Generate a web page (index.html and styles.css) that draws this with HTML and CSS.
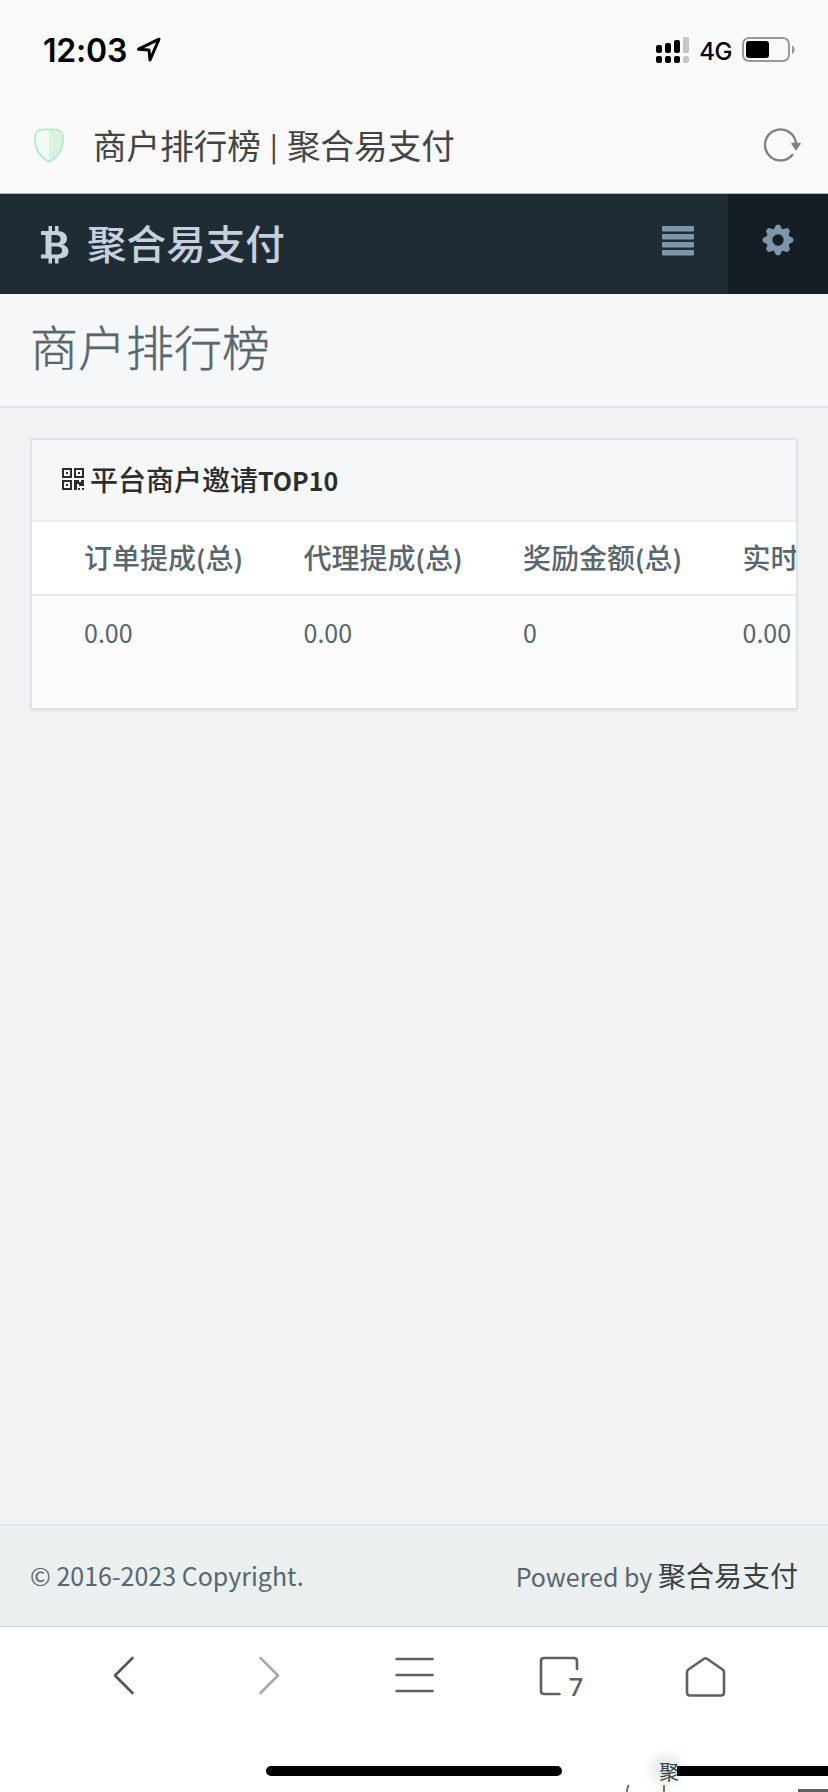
FILE: index.html
```html
<!DOCTYPE html>
<html lang="zh-CN">
<head>
<meta charset="utf-8">
<title>商户排行榜 | 聚合易支付</title>
<link rel="stylesheet" href="styles.css">
</head>
<body>
<div class="phone">
  <header class="chrome">
    <div class="status">
      <span class="clock">12:03</span>
      <svg class="locate" width="26" height="26" viewBox="0 0 26 26"><path d="M2.500 12.200 23 2.200 14 23 13 13z" fill="none" stroke="#000" stroke-width="3" stroke-linejoin="round"/></svg>
      <svg class="signal" width="34" height="27" viewBox="0 0 34 27"><g fill="#000"><rect y="8" width="6" height="8" rx="2"/><rect x="9" y="6" width="6" height="10" rx="2"/><rect x="18" y="3" width="6" height="13" rx="2"/><rect y="19" width="6" height="7" rx="2"/><rect x="9" y="19" width="6" height="7" rx="2"/><rect x="18" y="19" width="6" height="7" rx="2"/></g><g fill="#c6c6c6"><rect x="27" width="6" height="16" rx="1.5"/><rect x="27" y="19" width="6" height="7" rx="2"/></g></svg>
      <span class="network">4G</span>
      <svg class="battery" width="53" height="26" viewBox="0 0 53 26"><rect x="1" y="1" width="46" height="23" rx="6" fill="none" stroke="#999" stroke-width="2"/><rect x="4" y="4" width="23" height="17" rx="3"/><path d="M50 8.500c3.600 1.500 3.600 7 0 8.500z" fill="#999"/></svg>
    </div>
    <div class="address">
      <svg class="shield" width="30" height="35" viewBox="0 0 30 35"><path d="M15 1.200C20 1.200 24.500 2 27 3.500Q28.800 5 28.800 8V14C28.500 23 21.500 31 15 33.600 8.500 31 1.500 23 1.200 14V8Q1.200 5 3 3.500C5.500 2 10 1.200 15 1.200Z" fill="#f3fbf5"/><path d="M15 2C20 2 24 3 26.500 4.500L28 8V14C27.500 23 21 30 15 33z" fill="#d9f3e2"/><path d="M15 1.200C20 1.200 24.500 2 27 3.500Q28.800 5 28.800 8V14C28.500 23 21.500 31 15 33.600 8.500 31 1.500 23 1.200 14V8Q1.200 5 3 3.500C5.500 2 10 1.200 15 1.200Z" fill="none" stroke="#b9ebca" stroke-width="2"/></svg>
      <span class="page-name">商户排行榜<span class="divider"> | </span>聚合易支付</span>
      <svg class="reload" width="37" height="35" viewBox="0 0 37 35"><path d="M28.300 27A15.500 15.500 0 1 1 32 17" fill="none" stroke="#808080" stroke-width="2.400" stroke-linecap="round"/><path d="M28 15.500h8l-4 6z" fill="#808080" stroke="#808080" stroke-width="1.500" stroke-linejoin="round"/></svg>
    </div>
  </header>

  <nav class="navbar">
    <div class="brand">
      <svg width="28" height="39" viewBox="0 0 28 39"><path d="M0 6H15.500C23 6 26 9.500 26 13.500 26 16.500 24.500 18.800 21.500 19.800 25 20.500 27.500 23 27.500 26.500 27.500 31 24 33.500 16 33.500H0V29.500H4.500V10H0zM10.500 10V17.800H14.500C18 17.800 19.500 16.500 19.500 13.900S18 10 14.500 10zM10.500 21.500V29.500H15C19 29.500 21 28.500 21 25.500S19 21.500 15 21.500z" fill="#c7d0de" fill-rule="evenodd"/><path d="M7.500 1h3.500v6H7.500zM14 1h3.500v6H14zM7.500 32h3.500v6.500H7.500zM14 32h3.500v6.500H14z" fill="#c7d0de"/></svg>
      <span class="brand-name">聚合易支付</span>
    </div>
    <div class="menu-button"><svg width="32" height="30" viewBox="0 0 32 30" fill="#7f95a9"><rect width="32" height="5.600" rx="1"/><rect y="8" width="32" height="5.600" rx="1"/><rect y="16" width="32" height="5.600" rx="1"/><rect y="24" width="32" height="5.600" rx="1"/></svg></div>
    <div class="settings-button"><svg width="32" height="32" viewBox="-16 -16 32 32"><g fill="#7f95a9"><g id="teeth"><path id="tooth" d="M-4.500-10-2.300-14.500Q-2-15.300-1-15.300H1Q2-15.300 2.300-14.500L4.500-10z"/><use href="#tooth" transform="rotate(45)"/><use href="#tooth" transform="rotate(90)"/><use href="#tooth" transform="rotate(135)"/></g><use href="#teeth" transform="rotate(180)"/></g><circle r="8.700" fill="none" stroke="#7f95a9" stroke-width="6"/></svg></div>
  </nav>

  <main class="content">
    <div class="page-header"><h1>商户排行榜</h1></div>
    <section class="panel">
      <div class="panel-heading">
        <svg width="22" height="22" viewBox="0 0 22 22" shape-rendering="crispEdges"><g fill="none" stroke="#2b2d2f" stroke-width="2"><path d="M1 1h8v8H1zM13 1h8v8h-8zM1 13h8v8H1z"/></g><path d="M4 4h2v2H4zM16 4h2v2h-2zM4 16h2v2H4zM12 12h5v2h2v-2h3v6h-5v-2h-2v6h-3zM16 20h2v2h-2zM20 20h2v2h-2z" fill="#2b2d2f"/></svg>
        <span>平台商户邀请<span class="latin">TOP10</span></span>
      </div>
      <div class="table-wrap">
        <table>
          <thead><tr><th class="gutter"></th><th>订单提成<span class="latin">(</span>总<span class="latin">)</span></th><th>代理提成<span class="latin">(</span>总<span class="latin">)</span></th><th>奖励金额<span class="latin">(</span>总<span class="latin">)</span></th><th>实时</th></tr></thead>
          <tbody><tr><td></td><td>0.00</td><td>0.00</td><td>0</td><td>0.00</td></tr></tbody>
        </table>
      </div>
    </section>
  </main>

  <footer class="footer">
    <span class="latin">© 2016-2023 Copyright.</span>
    <span><span class="latin">Powered by </span><a class="site">聚合易支付</a></span>
  </footer>

  <div class="toolbar">
    <div class="tools">
      <svg viewBox="0 0 46 42"><path d="M31.500 3 14 20.500 31.500 38" stroke="#555"/></svg>
      <svg viewBox="0 0 46 42"><path d="M13.500 3 31 20.500 13.500 38" stroke="#aaa"/></svg>
      <svg viewBox="0 0 46 42"><path d="M4.500 4h36M4.500 20h36M4.500 36h36" stroke="#606060"/></svg>
      <svg viewBox="0 0 46 42"><path d="M21.500 39H6Q3 39 3 36V6Q3 3 6 3H36Q39 3 39 6V14" stroke="#606060"/><text x="30.500" y="40.500">7</text></svg>
      <svg viewBox="0 0 46 42"><path d="M21 3.800Q22.500 2.700 24 3.800L39.500 14.500Q41 15.500 41 17V37.500Q41 40.500 38 40.500H7Q4 40.500 4 37.500V17Q4 15.500 5.500 14.500Z" stroke="#606060"/></svg>
    </div>
    <div class="home-bar"></div>
    <div class="stray">
      <div class="stray-glow"></div>
      <div class="stray-bar"></div>
      <span class="stray-text">聚</span>
      <svg width="210" height="8" viewBox="0 0 210 8"><path d="M9 8Q9 3 11 1M46 1V8" fill="none" stroke="#777" stroke-width="2"/><path d="M180 6.500h30" stroke="#606060" stroke-width="3"/></svg>
    </div>
  </div>
</div>
</body>
</html>
```
FILE: styles.css
```css
* { box-sizing: border-box; }
body { margin: 0; font-family: "Noto Sans CJK SC", sans-serif; color: #58666e; }
svg { display: block; flex: none; }
.phone { width: 828px; height: 1792px; display: flex; flex-direction: column; overflow: hidden; background: #f0f2f4; }
.chrome { height: 194px; background: #f9f9f9; border-bottom: 1px solid #b3b5b8; }
.status { height: 98px; padding: 2px 33px 0 43px; display: flex; align-items: center; color: #000; font-family: Inter, sans-serif; }
.clock { font-size: 32px; font-weight: 600; width: 93px; letter-spacing: -0.200px; }
.locate { margin-right: auto; }
.network { font-size: 24px; font-weight: 500; margin: 2px 10px 0 9px; letter-spacing: -0.500px; }
.address { height: 94px; display: flex; align-items: center; padding: 0 27px 0 34px; }
.page-name { flex: 1; margin-left: 29px; font-size: 33.600px; color: #444; line-height: 48px; white-space: pre; padding-bottom: 1px; }
.divider { display: inline-block; width: 26px; text-align: center; font-size: 27px; line-height: 30px; font-weight: 500; vertical-align: 2px; }
.navbar { height: 100px; display: flex; background: #202c34; }
.brand { flex: 1; padding: 0 0 0 41px; display: flex; align-items: center; gap: 18px; font-size: 39.600px; line-height: 58px; font-weight: 500; color: #c7d0de; }
.brand-name { padding-bottom: 5px; }
.menu-button, .settings-button { width: 100px; display: flex; align-items: center; justify-content: center; padding-bottom: 6px; }
.settings-button { background: #161e25; padding-bottom: 8px; }
.content { height: 1230px; }
.page-header { height: 114px; padding: 16px 30px; background: #f6f7f9; border-bottom: 2px solid #e1e4e6; }
h1 { margin: 0; font-size: 48px; font-weight: 300; line-height: 70px; -webkit-text-stroke: 0.400px #58666e; }
.panel { height: 272px; margin: 30px; border: 2px solid #dfe4e6; border-bottom-color: #dbe0e2; border-radius: 3px; box-shadow: 0 2px 2px rgba(0, 0, 0, .04); background: #fbfbfb; overflow: hidden; }
.panel-heading { height: 82px; padding: 0 30px 2px; display: flex; align-items: center; gap: 6px; font-size: 28px; line-height: 40px; font-weight: 500; color: #2b2d2f; background: #f6f7f9; border-bottom: 2px solid #ebeef0; }
.panel-heading .latin { font-weight: 700; }
.table-wrap { overflow: hidden; }
table { table-layout: fixed; width: 900px; border-collapse: collapse; }
thead { background: #fff; border-bottom: 2px solid #e8ecee; }
tr { height: 73px; }
th, td { padding: 0 30px 1px; text-align: left; line-height: 40px; white-space: nowrap; }
th { font-size: 28px; font-weight: 500; padding-bottom: 2px; }
.gutter { width: 22px; padding: 0; }
td { font-size: 25px; }
.latin { font-size: 25px; }
th .latin { font-weight: 700; }
.footer { height: 103px; padding: 0 30px 2px; display: flex; justify-content: space-between; align-items: center; background: #ebeff0; border-top: 2px solid #e0e5e7; border-bottom: 1px solid #cbd0d2; font-size: 28px; line-height: 40px; }
.site { color: #3a3f44; }
.toolbar { flex: 1; position: relative; background: #fff; }
.tools { height: 98px; padding: 0 99px 0 101px; display: flex; justify-content: space-between; align-items: center; }
.tools svg { width: 46px; height: 42px; overflow: visible; fill: none; stroke-width: 2.600; stroke-linecap: round; stroke-linejoin: round; }
.tools text { font: 500 26px "Noto Sans", sans-serif; fill: #606060; stroke: none; }
.home-bar { width: 296px; height: 10px; margin: 41px auto 0; border-radius: 5px; background: #000; }
.stray { position: absolute; left: 618px; bottom: 0; width: 210px; height: 46px; }
.stray-glow { position: absolute; left: 38px; top: 14px; width: 20px; height: 18px; border-radius: 8px; background: #e9eff0; box-shadow: 0 0 8px 6px #e9eff0; }
.stray-bar { position: absolute; left: 59px; right: 0; top: 20px; height: 10px; background: #000; }
.stray-text { position: absolute; left: 41px; top: 16px; font-size: 20px; line-height: 20px; color: #3a3f44; }
.stray svg { position: absolute; bottom: 0; left: 0; }
```
